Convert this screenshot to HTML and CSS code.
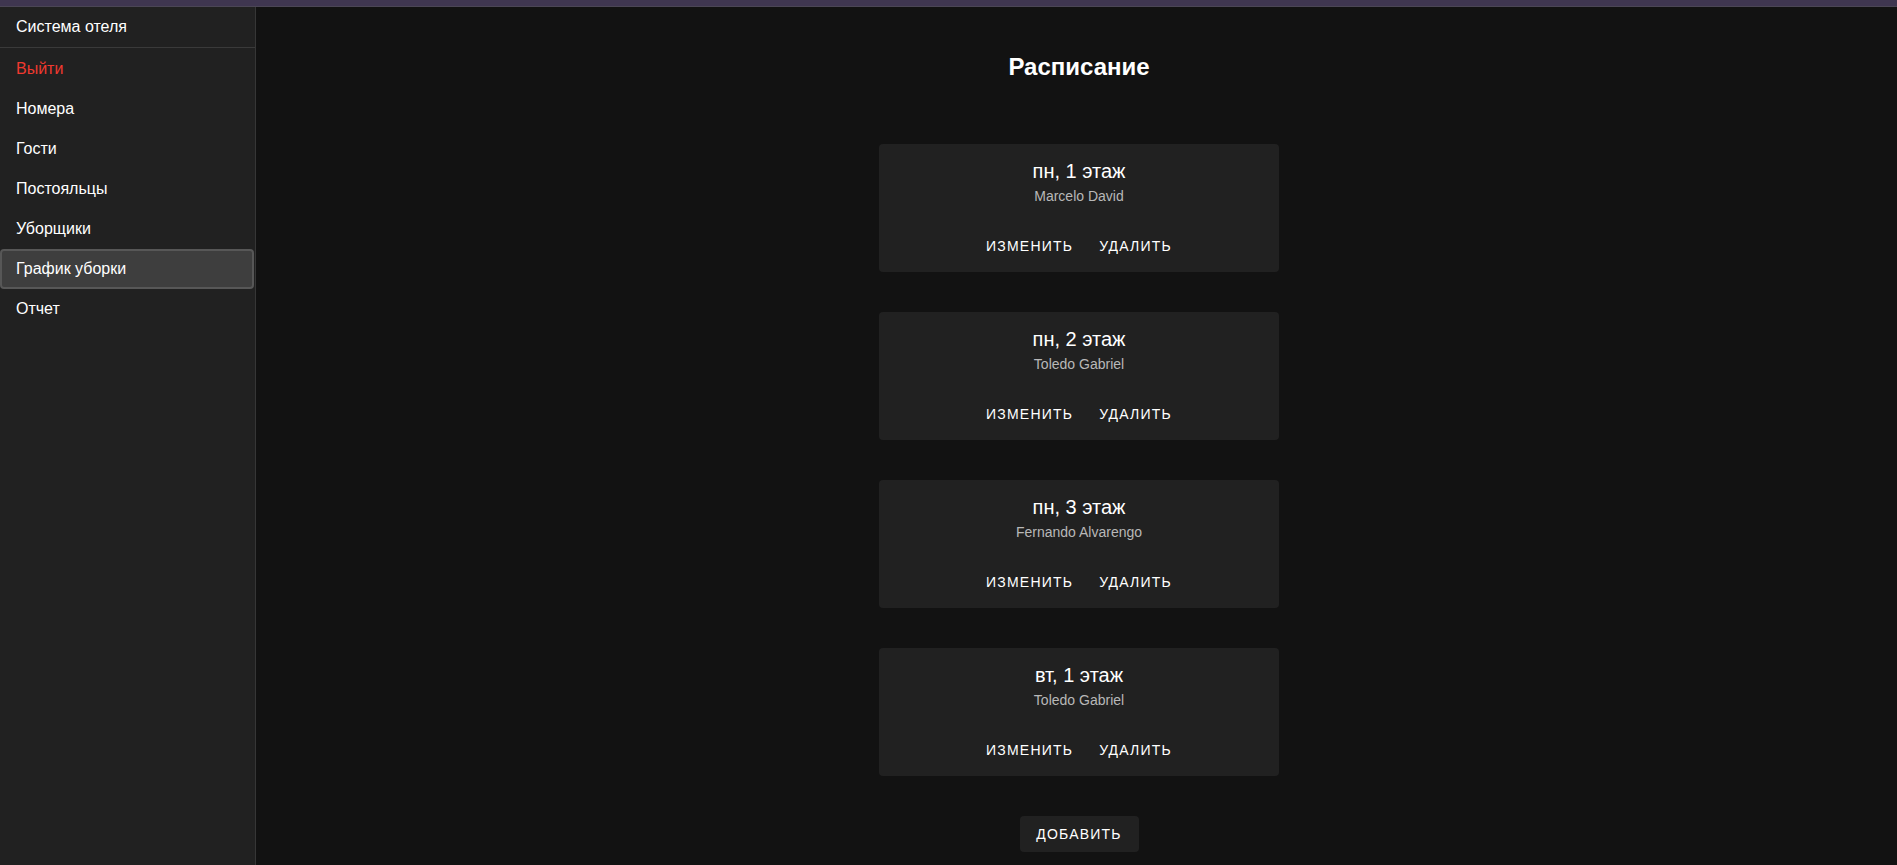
FILE: index.html
```html
<!DOCTYPE html>
<html lang="ru">
<head>
<meta charset="utf-8">
<title>Система отеля</title>
<link rel="stylesheet" href="styles.css">
</head>
<body>
<div class="topbar"></div>
<div class="layout">
  <nav class="sidebar">
    <div class="brand">Система отеля</div>
    <ul class="menu">
      <li class="item logout">Выйти</li>
      <li class="item">Номера</li>
      <li class="item">Гости</li>
      <li class="item">Постояльцы</li>
      <li class="item">Уборщики</li>
      <li class="item active">График уборки</li>
      <li class="item">Отчет</li>
    </ul>
  </nav>
  <main class="main">
    <h1 class="title">Расписание</h1>
    <div class="cards">
      <div class="card">
        <div class="card-title">пн, 1 этаж</div>
        <div class="card-sub">Marcelo David</div>
        <div class="actions"><button class="btn">Изменить</button><button class="btn">Удалить</button></div>
      </div>
      <div class="card">
        <div class="card-title">пн, 2 этаж</div>
        <div class="card-sub">Toledo Gabriel</div>
        <div class="actions"><button class="btn">Изменить</button><button class="btn">Удалить</button></div>
      </div>
      <div class="card">
        <div class="card-title">пн, 3 этаж</div>
        <div class="card-sub">Fernando Alvarengo</div>
        <div class="actions"><button class="btn">Изменить</button><button class="btn">Удалить</button></div>
      </div>
      <div class="card">
        <div class="card-title">вт, 1 этаж</div>
        <div class="card-sub">Toledo Gabriel</div>
        <div class="actions"><button class="btn">Изменить</button><button class="btn">Удалить</button></div>
      </div>
    </div>
    <button class="add">Добавить</button>
  </main>
</div>
</body>
</html>
```
FILE: styles.css
```css
* { box-sizing: border-box; }
html, body { margin: 0; padding: 0; height: 100%; overflow: hidden; }
body {
  background: #121212;
  color: #fff;
  font-family: "Liberation Sans", Arial, sans-serif;
}
.topbar {
  height: 7px;
  background: #3f3650;
  border-bottom: 1px solid #4b4655;
}
.layout {
  display: flex;
  height: calc(100% - 7px);
}
.sidebar {
  width: 256px;
  flex: none;
  background: #212121;
  border-right: 1px solid #363636;
}
.brand {
  height: 41px;
  padding: 0 16px;
  display: flex;
  align-items: center;
  font-size: 16px;
  border-bottom: 1px solid #3a3a3a;
}
.menu {
  list-style: none;
  margin: 0;
  padding: 1px 0 0;
}
.item {
  height: 40px;
  padding: 0 15px;
  display: flex;
  align-items: center;
  font-size: 16px;
  color: #fff;
  border: 1px solid transparent;
  border-radius: 4px;
  margin-right: 1px;
}
.logout { color: #f0392f; }
.active {
  background: #3e3e3e;
  border: 2px solid #575757;
  padding-left: 14px;
}
.main {
  flex: 1;
  display: flex;
  flex-direction: column;
  align-items: center;
  padding-left: 5px;
}
.title {
  margin: 45px 0 0;
  font-size: 24px;
  line-height: 30px;
  font-weight: bold;
}
.cards {
  margin-top: 62px;
  display: flex;
  flex-direction: column;
  gap: 40px;
}
.card {
  width: 400px;
  height: 128px;
  background: #212121;
  border-radius: 4px;
  padding-top: 14px;
  display: flex;
  flex-direction: column;
  align-items: center;
}
.card-title {
  font-size: 20px;
  line-height: 26px;
}
.card-sub {
  margin-top: 2px;
  font-size: 14px;
  line-height: 20px;
  color: #b8b8b8;
}
.actions {
  margin-top: 22px;
  display: flex;
  gap: 10px;
}
.btn, .add {
  font-family: "Liberation Sans", Arial, sans-serif;
  font-size: 14px;
  letter-spacing: 1.2px;
  text-transform: uppercase;
  color: #fff;
  background: transparent;
  border: none;
  height: 36px;
  padding: 0 8px;
  border-radius: 4px;
}
.add {
  margin-top: 40px;
  background: #212121;
  width: 119px;
  padding: 0;
}
```
